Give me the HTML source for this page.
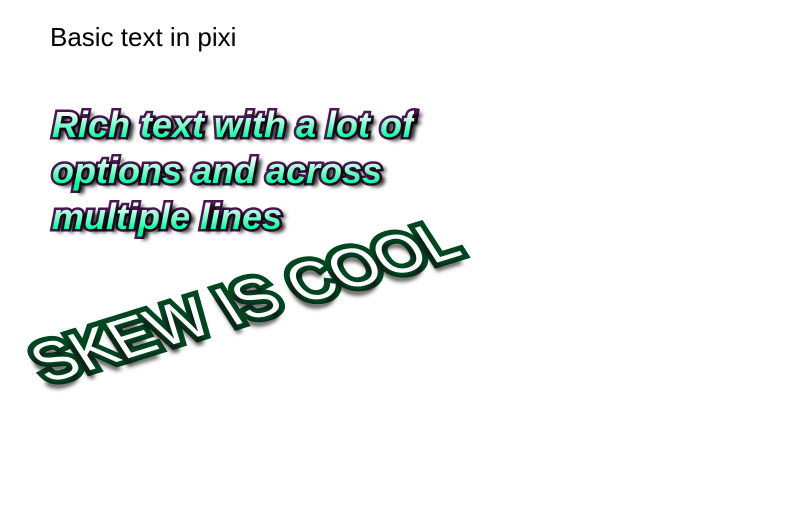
<!DOCTYPE html>
<html><head><meta charset="utf-8"><style>
html,body{margin:0;padding:0;background:#fff;width:800px;height:512px;overflow:hidden;position:relative}
.basic{position:absolute;left:50px;top:22px;font:26px/30px "Liberation Sans",Arial,sans-serif;color:#000;white-space:nowrap}
.rich{position:absolute;left:52px;top:102px;font:italic bold 36px/46px "Liberation Sans",Arial,sans-serif;white-space:nowrap}
.rich.a{color:#4a1850;-webkit-text-stroke:5px #4a1850;paint-order:stroke fill;text-shadow:5px 3px 4px rgba(0,0,0,1)}
.rich.b{color:transparent;background:repeating-linear-gradient(180deg,#fff 0px,#fff 10px,#00ff99 36px,#00ff99 46px);-webkit-background-clip:text;background-clip:text}
.skew{position:absolute;left:0;top:0;font:normal 60px/70px "Liberation Sans",Arial,sans-serif;color:#fff;white-space:nowrap;
-webkit-text-stroke:11px #004620;paint-order:stroke fill;stroke-linejoin:round;text-shadow:-5px 8.6px 4px rgba(17,17,17,0.8);
transform-origin:0 0;transform:translate(245px,302px) matrix(0.955,-0.296,0.54,0.84,0,0) translate(-50%,-50%)}
</style></head><body>
<div class="basic">Basic text in pixi</div>
<div class="rich a">Rich text with a lot of<br>options and across<br>multiple lines</div>
<div class="rich b">Rich text with a lot of<br>options and across<br>multiple lines</div>
<div class="skew">SKEW IS COOL</div>
</body></html>
